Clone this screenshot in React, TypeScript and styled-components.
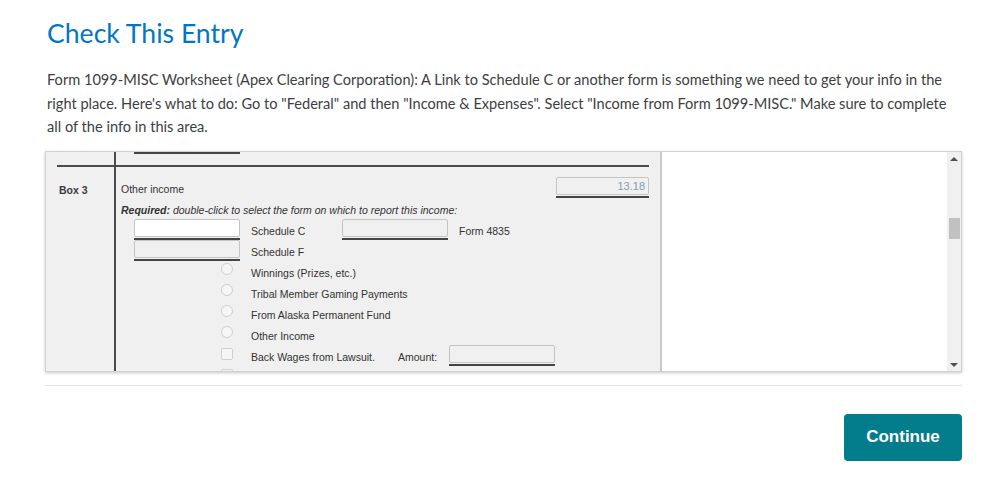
import React from 'react'
import styled, { createGlobalStyle } from 'styled-components'

const GlobalStyle = createGlobalStyle`
    body {
        margin: 0;
        background: #ffffff;
    }
`

const Page = styled.div`
    padding: 14px 37px 0 45px;
    font-family: Lato, 'Open Sans', sans-serif;
`

const Title = styled.h1`
    margin: 0 0 0 2px;
    font-size: 26.6px;
    line-height: 38px;
    font-weight: 400;
    color: #0077c5;
`

const Intro = styled.p`
    margin: 16px 0 0 2px;
    font-size: 14.6px;
    line-height: 23.5px;
    color: #3d3e42;
    white-space: nowrap;
`

const Panel = styled.div`
    margin-top: 12px;
    height: 219px;
    display: flex;
    border: 1px solid #d2d2d2;
    box-shadow: 0 1px 3px rgba(0, 0, 0, 0.22);
    overflow: hidden;
`

// gray worksheet area, the column rule is drawn by the background
const Worksheet = styled.div`
    width: 614px;
    flex: none;
    border-right: 2px solid #c8c8c8;
    background: linear-gradient(
            to right,
            transparent 68px,
            #4a4a4a 68px,
            #4a4a4a 70px,
            transparent 70px
        ),
        #f0f0f0;
    font-family: 'Liberation Sans', Arial, sans-serif;
    font-size: 10.5px;
    color: #333333;
    overflow: hidden;
`

const Sheet = styled.div`
    margin-top: -19px;
`

const Rule = styled.div`
    margin: 11px 11px 0;
    height: 2px;
    background: #4a4a4a;
`

const Row = styled.div<{ $top?: number }>`
    display: flex;
    height: 21px;
    margin-top: ${(p) => p.$top ?? 0}px;
`

const Label = styled.div`
    width: 75px;
    flex: none;
    padding: 7px 0 0 13px;
    box-sizing: border-box;
    font-weight: bold;
    color: #3a3a3a;
`

const Cell = styled.div<{ $indent?: number }>`
    flex: 1;
    display: flex;
    align-items: flex-start;
    padding-left: ${(p) => p.$indent ?? 0}px;
    padding-right: 11px;
`

const Text = styled.span<{ $width?: number; $italic?: boolean }>`
    padding-top: 6px;
    width: ${(p) => (p.$width ? `${p.$width}px` : 'auto')};
    flex: none;
    font-style: ${(p) => (p.$italic ? 'italic' : 'normal')};
    white-space: nowrap;
`

const Spacer = styled.div`
    flex: 1;
`

const Field = styled.div<{ $width?: number; $last?: boolean }>`
    width: ${(p) => p.$width ?? 106}px;
    flex: none;
    padding-bottom: 1px;
    border-bottom: 2px solid #444444;
    margin-right: ${(p) => (p.$last ? 0 : 11)}px;
`

const Input = styled.div<{ $white?: boolean }>`
    height: 16px;
    border: 1px solid #c4c4c4;
    border-radius: 2px;
    background: ${(p) => (p.$white ? '#ffffff' : '#f0f0f0')};
    color: #8a9bb0;
    font-size: 11px;
    line-height: 16px;
    text-align: right;
    padding-right: 3px;
`

const ControlSlot = styled.div`
    width: 106px;
    flex: none;
    display: flex;
    justify-content: flex-end;
    padding: 2px 7px 0 0;
    margin-right: 11px;
    box-sizing: border-box;
`

const Radio = styled.span`
    width: 12px;
    height: 12px;
    border: 1px solid #cfcfcf;
    border-radius: 50%;
    background: #f6f6f6;
    box-sizing: border-box;
`

const Check = styled(Radio)`
    border-radius: 2px;
    margin-top: 1px;
`

const Preview = styled.div`
    flex: 1;
    background: #ffffff;
`

const Scrollbar = styled.div`
    width: 14px;
    flex: none;
    background: #f0f0f0;
    display: flex;
    flex-direction: column;
    align-items: center;
    padding: 5px 0 4px;
    box-sizing: border-box;
`

const Arrow = styled.span<{ $down?: boolean }>`
    width: 0;
    height: 0;
    border-left: 4px solid transparent;
    border-right: 4px solid transparent;
    ${(p) =>
        p.$down
            ? 'border-top: 4px solid #505050;'
            : 'border-bottom: 4px solid #505050;'}
`

const Thumb = styled.span`
    width: 11px;
    height: 21px;
    margin: 57px 0 auto;
    background: #c1c1c1;
`

const Divider = styled.div`
    margin-top: 13px;
    height: 1px;
    background: #e3e3e3;
`

const Footer = styled.div`
    display: flex;
    justify-content: flex-end;
    padding-top: 28px;
`

const ContinueButton = styled.button`
    width: 118px;
    height: 47px;
    border: none;
    border-radius: 4px;
    background: #037c8c;
    color: #ffffff;
    font-family: 'Liberation Sans', Arial, sans-serif;
    font-size: 17px;
    font-weight: bold;
    cursor: pointer;
`

const radios = [
    'Winnings (Prizes, etc.)',
    'Tribal Member Gaming Payments',
    'From Alaska Permanent Fund',
    'Other Income',
]

export default function App() {
    return (
        <Page>
            <GlobalStyle />
            <Title>Check This Entry</Title>
            <Intro>
                Form 1099-MISC Worksheet (Apex Clearing Corporation): A Link to
                Schedule C or another form is something we need to get your
                info in the
                <br />
                right place. Here's what to do: Go to "Federal" and then
                "Income &amp; Expenses". Select "Income from Form 1099-MISC."
                Make sure to complete
                <br />
                all of the info in this area.
            </Intro>

            <Panel>
                <Worksheet>
                    <Sheet>
                        <Row>
                            <Label />
                            <Cell $indent={13}>
                                <Field>
                                    <Input />
                                </Field>
                            </Cell>
                        </Row>
                        <Rule />
                        <Row $top={10}>
                            <Label>Box 3</Label>
                            <Cell>
                                <Text>Other income</Text>
                                <Spacer />
                                <Field $width={93} $last>
                                    <Input>13.18</Input>
                                </Field>
                            </Cell>
                        </Row>
                        <Row>
                            <Label />
                            <Cell>
                                <Text $italic>
                                    <b>Required:</b> double-click to select the
                                    form on which to report this income:
                                </Text>
                            </Cell>
                        </Row>
                        <Row>
                            <Label />
                            <Cell $indent={13}>
                                <Field>
                                    <Input $white />
                                </Field>
                                <Text $width={91}>Schedule C</Text>
                                <Field>
                                    <Input />
                                </Field>
                                <Text>Form 4835</Text>
                            </Cell>
                        </Row>
                        <Row>
                            <Label />
                            <Cell $indent={13}>
                                <Field>
                                    <Input />
                                </Field>
                                <Text>Schedule F</Text>
                            </Cell>
                        </Row>
                        {radios.map((r) => (
                            <Row key={r}>
                                <Label />
                                <Cell $indent={13}>
                                    <ControlSlot>
                                        <Radio />
                                    </ControlSlot>
                                    <Text>{r}</Text>
                                </Cell>
                            </Row>
                        ))}
                        <Row>
                            <Label />
                            <Cell $indent={13}>
                                <ControlSlot>
                                    <Check />
                                </ControlSlot>
                                <Text $width={147}>Back Wages from Lawsuit.</Text>
                                <Text $width={51}>Amount:</Text>
                                <Field>
                                    <Input />
                                </Field>
                            </Cell>
                        </Row>
                        <Row>
                            <Label />
                            <Cell $indent={13}>
                                <ControlSlot>
                                    <Check />
                                </ControlSlot>
                            </Cell>
                        </Row>
                    </Sheet>
                </Worksheet>
                <Preview />
                <Scrollbar>
                    <Arrow />
                    <Thumb />
                    <Arrow $down />
                </Scrollbar>
            </Panel>

            <Divider />
            <Footer>
                <ContinueButton>Continue</ContinueButton>
            </Footer>
        </Page>
    )
}
